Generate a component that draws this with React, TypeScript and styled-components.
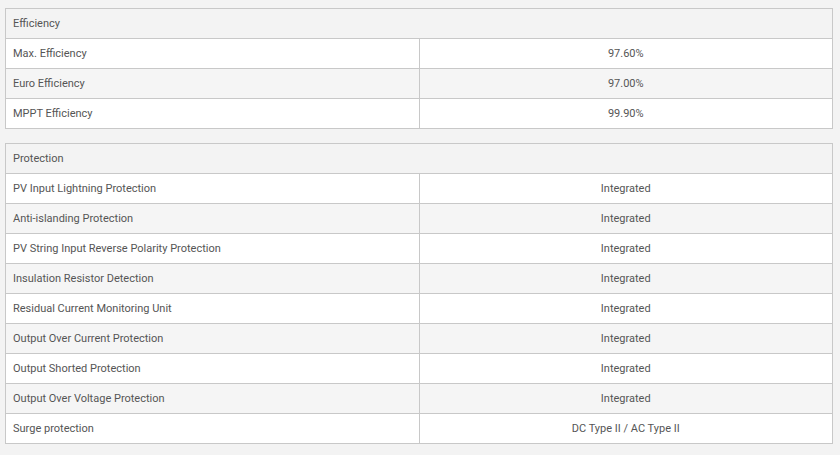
import React from "react";
import styled, { createGlobalStyle } from "styled-components";

const Global = createGlobalStyle`
  html, body { margin: 0; padding: 0; background: #f3f3f3; }
  body { font-family: Roboto, "Noto Sans", Arial, sans-serif; }
`;

const Page = styled.div`
  display: flex;
  flex-direction: column;
  gap: 14px;
  padding: 8px 7px 0 5px;
`;

const Table = styled.table`
  width: 100%;
  border-collapse: collapse;
  border: 1px solid #c8c8c8;
  table-layout: fixed;
  font-size: 11px;
  color: #555;
`;

const HeadCell = styled.th`
  height: 29px;
  padding: 0 0 0 7px;
  text-align: left;
  font-weight: 400;
  background: #f3f3f3;
  border: 1px solid #c8c8c8;
`;

const Row = styled.tr<{ $alt: boolean }>`
  background: ${(p) => (p.$alt ? "#f5f5f5" : "#ffffff")};
`;

const Label = styled.td`
  height: 29px;
  padding: 0 0 0 7px;
  border: 1px solid #c8c8c8;
  width: 50%;
`;

const Value = styled.td`
  height: 29px;
  padding: 0;
  text-align: center;
  border: 1px solid #c8c8c8;
`;

type Section = { title: string; rows: [string, string][] };

const sections: Section[] = [
  {
    title: "Efficiency",
    rows: [
      ["Max. Efficiency", "97.60%"],
      ["Euro Efficiency", "97.00%"],
      ["MPPT Efficiency", "99.90%"],
    ],
  },
  {
    title: "Protection",
    rows: [
      ["PV Input Lightning Protection", "Integrated"],
      ["Anti-islanding Protection", "Integrated"],
      ["PV String Input Reverse Polarity Protection", "Integrated"],
      ["Insulation Resistor Detection", "Integrated"],
      ["Residual Current Monitoring Unit", "Integrated"],
      ["Output Over Current Protection", "Integrated"],
      ["Output Shorted Protection", "Integrated"],
      ["Output Over Voltage Protection", "Integrated"],
      ["Surge protection", "DC Type II / AC Type II"],
    ],
  },
];

export default function App() {
  return (
    <>
      <Global />
      <Page>
        {sections.map((s) => (
          <Table key={s.title}>
            <thead>
              <tr>
                <HeadCell colSpan={2}>{s.title}</HeadCell>
              </tr>
            </thead>
            <tbody>
              {s.rows.map(([k, v], i) => (
                <Row key={k} $alt={i % 2 === 1}>
                  <Label>{k}</Label>
                  <Value>{v}</Value>
                </Row>
              ))}
            </tbody>
          </Table>
        ))}
      </Page>
    </>
  );
}
